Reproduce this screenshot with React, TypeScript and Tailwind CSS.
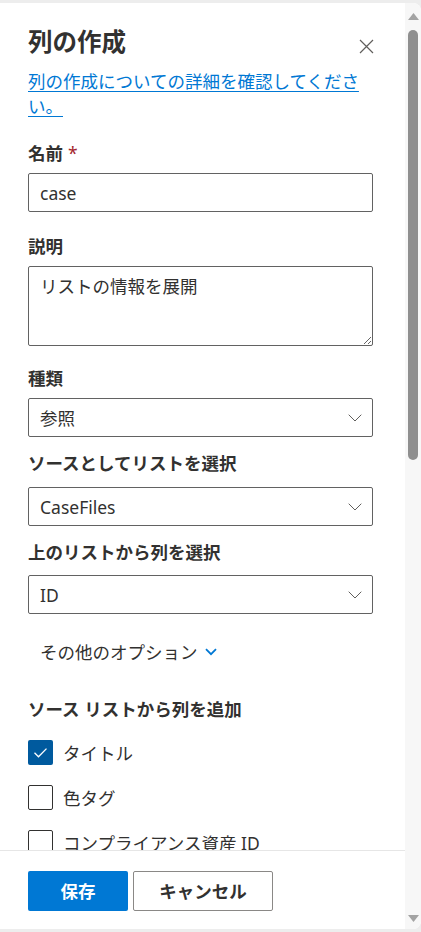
import React from 'react';

// 下向きの細い矢印（ドロップダウン用）
function Chevron() {
  return (
    <svg width="14" height="8" viewBox="0 0 14 8" fill="none">
      <path d="M0.7 0.7 L7 7 L13.3 0.7" stroke="#605e5c" strokeWidth="1" />
    </svg>
  );
}

function Dropdown({ value }: { value: string }) {
  return (
    <div className="flex h-[39px] items-center justify-between rounded-[2px] border border-[#626262] pl-[11px] pr-[10px] text-[#323130]">
      <span className="leading-[24px]">{value}</span>
      <Chevron />
    </div>
  );
}

function Label({ text, className = '', required = false }: { text: string; className?: string; required?: boolean }) {
  return (
    <div className={`font-bold leading-[24px] text-[#323130] ${className}`}>
      {text}
      {required && <span className="ml-[5px] font-normal text-[#a4262c]">*</span>}
    </div>
  );
}

function Checkbox({ label, checked = false }: { label: string; checked?: boolean }) {
  return (
    <div className="flex items-center">
      {checked ? (
        <span className="flex h-[25px] w-[25px] shrink-0 items-center justify-center rounded-[2px] bg-[#005a9e]">
          <svg width="25" height="25" viewBox="0 0 25 25" fill="none">
            <path d="M6.5 12.8 L10.5 16.8 L18.5 8.6" stroke="#ffffff" strokeWidth="1.3" />
          </svg>
        </span>
      ) : (
        <span className="h-[25px] w-[25px] shrink-0 rounded-[2px] border border-[#323130] bg-white" />
      )}
      <span className="ml-[10px] leading-[24px] text-[#323130]">{label}</span>
    </div>
  );
}

export default function App() {
  return (
    <div className='h-[932px] w-[421px] overflow-hidden bg-[#ededed] pt-[3px] text-[17.5px] [font-family:"Noto_Sans","Noto_Sans_CJK_JP",sans-serif]'>
      <div className="flex h-[926px] overflow-hidden rounded-r-[8px] bg-white">
        {/* --- パネル本体 --- */}
        <div className="flex min-w-0 flex-1 flex-col">
          <div className="flex-1 overflow-hidden pl-[28px] pr-[32px] pt-[23px]">
            <div className="flex items-start justify-between">
              <h1 className="text-[24.5px] font-bold leading-[32px] text-[#323130]">列の作成</h1>
              <button className="mr-[-1px] mt-[12px] flex h-[16px] w-[16px] items-center justify-center" aria-label="閉じる">
                <svg width="15" height="15" viewBox="0 0 15 15" fill="none">
                  <path d="M1 1 L14 14 M14 1 L1 14" stroke="#605e5c" strokeWidth="1.2" />
                </svg>
              </button>
            </div>

            <a className="mt-[11px] block leading-[25px] text-[#0078d4] underline underline-offset-[3px]">
              列の作成についての詳細を確認してください。
            </a>

            <Label text="名前" required className="mt-[22px]" />
            <input
              defaultValue="case"
              className="mt-[8px] block h-[39px] w-full rounded-[2px] border border-[#626262] px-[11px] text-[#323130] outline-none"
            />

            <Label text="説明" className="mt-[22px]" />
            <textarea
              defaultValue="リストの情報を展開"
              className="mt-[8px] block h-[80px] w-full rounded-[2px] border border-[#626262] px-[11px] py-[7px] leading-[24px] text-[#323130] outline-none"
            />

            <Label text="種類" className="mt-[20px]" />
            <div className="mt-[8px]">
              <Dropdown value="参照" />
            </div>

            <Label text="ソースとしてリストを選択" className="mt-[14px]" />
            <div className="mt-[12px]">
              <Dropdown value="CaseFiles" />
            </div>

            <Label text="上のリストから列を選択" className="mt-[14px]" />
            <div className="mt-[11px]">
              <Dropdown value="ID" />
            </div>

            <button className="mt-[26px] flex items-center pl-[12px] leading-[24px] text-[#323130]">
              その他のオプション
              <svg className="ml-[7px]" width="12" height="8" viewBox="0 0 12 8" fill="none">
                <path d="M1 1.2 L6 6.2 L11 1.2" stroke="#0078d4" strokeWidth="1.8" />
              </svg>
            </button>

            <Label text="ソース リストから列を追加" className="mt-[33px]" />
            <div className="mt-[19px] flex flex-col gap-[20px]">
              <Checkbox label="タイトル" checked />
              <Checkbox label="色タグ" />
              <Checkbox label="コンプライアンス資産 ID" />
            </div>
          </div>

          {/* --- フッター --- */}
          <div className="h-[79px] shrink-0 border-t border-[#e6e6e6] pl-[28px] pt-[20px]">
            <div className="flex gap-[5px]">
              <button className="h-[40px] w-[100px] rounded-[2px] bg-[#0078d4] font-bold text-white">保存</button>
              <button className="h-[40px] w-[140px] rounded-[2px] border border-[#8a8886] bg-white font-bold text-[#323130]">
                キャンセル
              </button>
            </div>
          </div>
        </div>

        {/* --- スクロールバー --- */}
        <div className="flex w-[16px] shrink-0 flex-col items-center bg-[#f7f7f7] pb-[7px] pt-[10px]">
          <svg width="11" height="7" viewBox="0 0 11 7">
            <path d="M5.5 0 L11 7 L0 7 Z" fill="#a3a3a3" />
          </svg>
          <div className="mt-[10px] h-[430px] w-[10px] rounded-[5px] bg-[#8f8f8f]" />
          <div className="flex-1" />
          <svg width="11" height="7" viewBox="0 0 11 7">
            <path d="M0 0 L11 0 L5.5 7 Z" fill="#a3a3a3" />
          </svg>
        </div>
      </div>
    </div>
  );
}
